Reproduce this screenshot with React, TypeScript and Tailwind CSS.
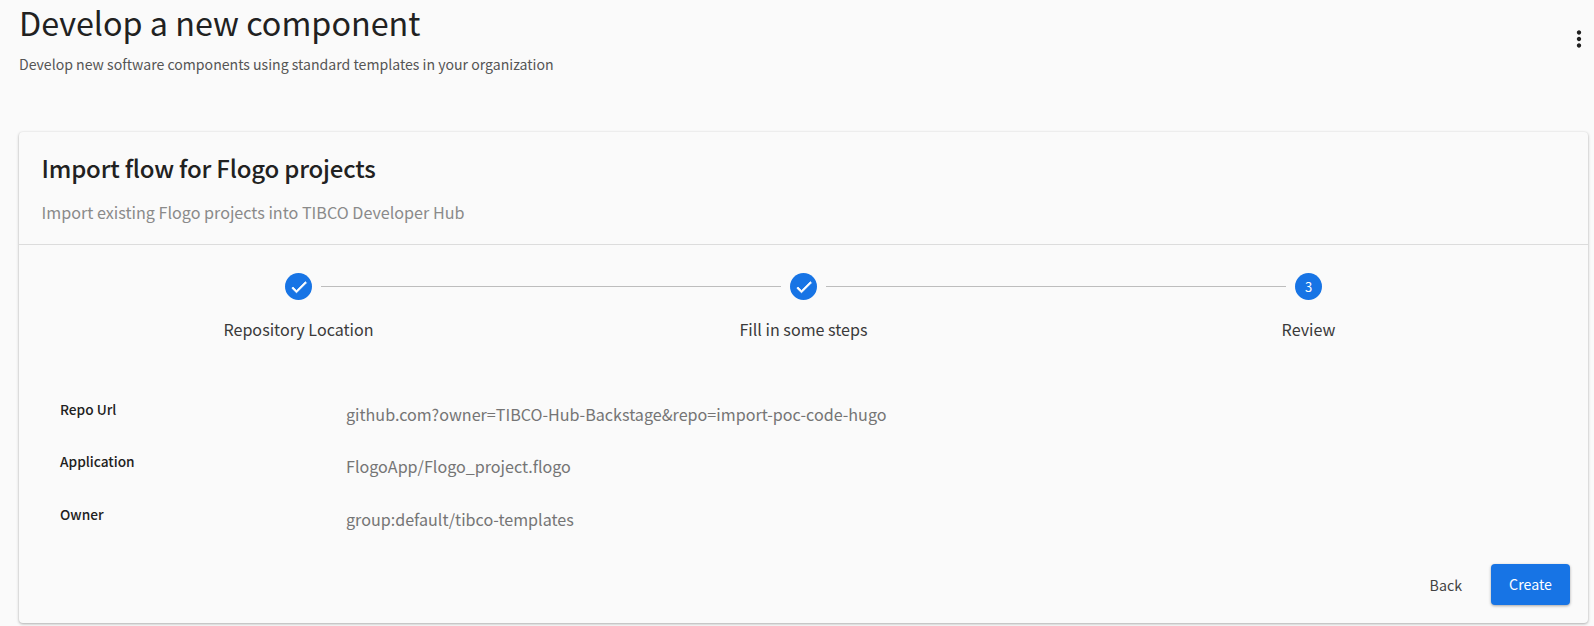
const font = "font-['Noto_Sans_CJK_JP','Source_Sans_Pro',sans-serif]";

function Check() {
  return (
    <svg viewBox="0 0 24 24" className="w-[20px] h-[20px]" fill="white" stroke="white" strokeWidth="0.9">
      <path d="M9 16.17 4.83 12l-1.42 1.41L9 19 21 7l-1.41-1.41z" />
    </svg>
  );
}

function Circle({ children }: { children: React.ReactNode }) {
  return (
    <div className="w-[27px] h-[27px] rounded-full bg-[#1774e5] flex items-center justify-center text-white text-[13px] leading-none shrink-0">
      {children}
    </div>
  );
}

const Line = () => <div className="flex-1 h-px bg-[#bdbdbd] mx-[9px]" />;

function Row({ label, value }: { label: string; value: string }) {
  return (
    <div className="flex">
      <div className="w-[286px] text-[13.7px] font-medium leading-[20px] text-[#212121]">{label}</div>
      <div className="text-[16.12px] leading-[24px] pt-[3px] text-[#757575]">{value}</div>
    </div>
  );
}

export default function App() {
  return (
    <div className={`${font} w-[1594px] h-[626px] overflow-hidden bg-[#fafafa] text-[#212121]`}>
      <div className="flex justify-between pl-[19px] pr-[2px] h-[132px]">
        <div>
          <h1 className="text-[32.3px] leading-[44px] font-normal">Develop a new component</h1>
          <p className="text-[14.1px] leading-[20px] mt-[10px] text-[#555555]">
            Develop new software components using standard templates in your organization
          </p>
        </div>
        <svg viewBox="0 0 24 24" className="w-[26px] h-[26px] mt-[26px]" fill="#212121">
          <path d="M12 8c1.1 0 2-.9 2-2s-.9-2-2-2-2 .9-2 2 .9 2 2 2zm0 2c-1.1 0-2 .9-2 2s.9 2 2 2 2-.9 2-2-.9-2-2-2zm0 6c-1.1 0-2 .9-2 2s.9 2 2 2 2-.9 2-2-.9-2-2-2z" />
        </svg>
      </div>
      <div className="ml-[19px] w-[1569px] h-[491px] rounded-[4px] bg-[#fafafa] shadow-[0_1px_3px_rgba(0,0,0,0.3),0_0_2px_rgba(0,0,0,0.06)]">
        <div className="h-[113px] pl-[22.5px] pt-[18px] border-b border-[#dcdcdc]">
          <h2 className="text-[24px] leading-[36px] font-medium tracking-[-0.2px]">Import flow for Flogo projects</h2>
          <p className="text-[16.15px] leading-[24px] mt-[14px] text-[#8a8a8a]">
            Import existing Flogo projects into TIBCO Developer Hub
          </p>
        </div>
        <div className="pt-[28px]">
          <div className="flex items-center px-[266px]">
            <Circle><Check /></Circle>
            <Line />
            <Circle><Check /></Circle>
            <Line />
            <Circle>3</Circle>
          </div>
          <div className="grid grid-cols-3 w-[1515px] ml-[27px] mt-[17px] text-center text-[16.1px] leading-[24px] text-[#3a3a3a]">
            <div>Repository Location</div>
            <div>Fill in some steps</div>
            <div>Review</div>
          </div>
          <div className="pl-[41px] mt-[58px] flex flex-col">
            <div className="h-[52px]">
              <Row label="Repo Url" value="github.com?owner=TIBCO-Hub-Backstage&repo=import-poc-code-hugo" />
            </div>
            <div className="h-[53px]">
              <Row label="Application" value="FlogoApp/Flogo_project.flogo" />
            </div>
            <div className="h-[52px]">
              <Row label="Owner" value="group:default/tibco-templates" />
            </div>
          </div>
          <div className="flex justify-end items-center pr-[18px] mt-[8px]">
            <button className="text-[14.2px] leading-[20px] text-[#424242] mr-[29px]">Back</button>
            <button className="w-[79px] h-[41px] rounded-[4px] bg-[#1774e5] text-white text-[14.2px] pt-[1px] shadow-[0_1px_3px_rgba(0,0,0,0.35)]">
              Create
            </button>
          </div>
        </div>
      </div>
    </div>
  );
}
